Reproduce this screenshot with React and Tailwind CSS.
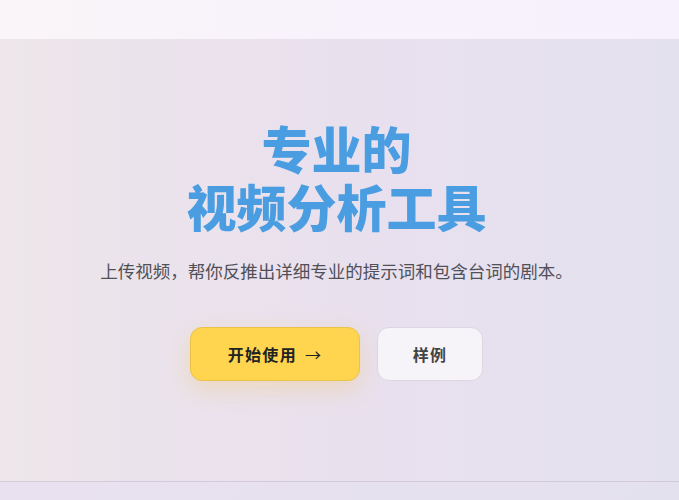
export default function App() {
  const font = { fontFamily: '"Noto Sans CJK SC", "Noto Sans", sans-serif' };
  return (
    <div className="w-[679px] h-[500px] overflow-hidden bg-[#e8e1ee]" style={font}>
      <header className="h-[39px] bg-gradient-to-r from-[#faf5f8] via-[#f8f3fb] to-[#f7f1fe]" />
      <section className="border-b border-[#d3cbdc] bg-gradient-to-r from-[#ede6ea] via-[#e9e0ee] to-[#e4e1ef] pt-[79px] pb-[100px] pr-[6px] flex flex-col items-center">
        <h1 className="text-[50px] leading-[58px] font-black text-[#4a9de0] text-center">
          专业的
          <br />
          视频分析工具
        </h1>
        <p className="mt-[23px] text-[17.5px] leading-[28px] text-[#505058]">
          上传视频，帮你反推出详细专业的提示词和包含台词的剧本。
        </p>
        <div className="mt-[42px] flex gap-[17px]">
          <button className="w-[170px] h-[54px] rounded-[12px] bg-[#ffd54f] border border-[#e9c24a] text-[#222] text-[16px] font-bold tracking-[0.08em] shadow-[0_8px_24px_rgba(240,190,60,0.28)] flex items-center justify-center gap-2">
            <span>开始使用</span>
            <span className="font-normal">→</span>
          </button>
          <button className="w-[106px] h-[54px] rounded-[12px] bg-[#f6f4f8] border border-[#dcd6e1] text-[#444] text-[16px] font-bold tracking-[0.08em] flex items-center justify-center">
            样例
          </button>
        </div>
      </section>
      <div className="h-[40px] bg-gradient-to-r from-[#e9e1ef] to-[#e4e1ef]" />
    </div>
  );
}
